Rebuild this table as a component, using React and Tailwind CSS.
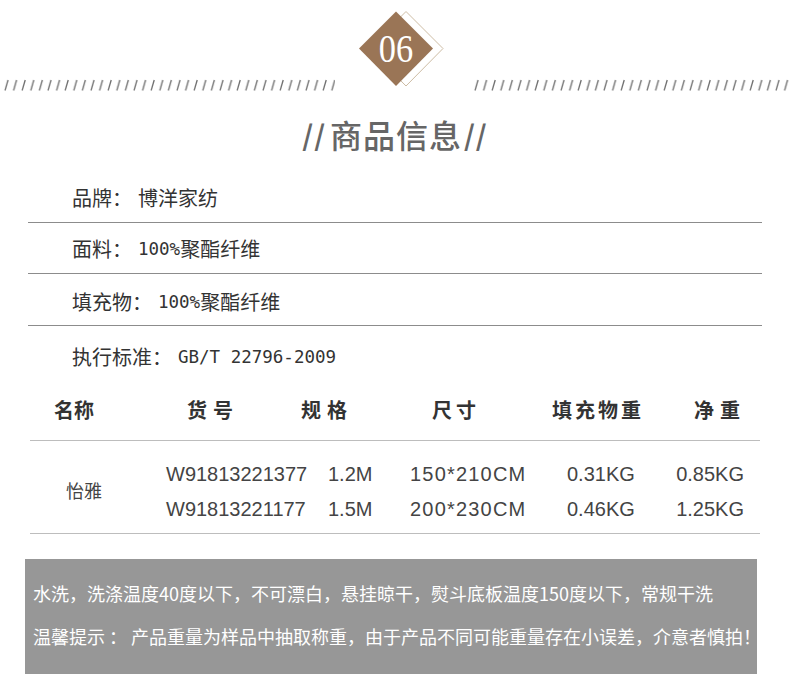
const CJK = { fontFamily: '"Noto Sans CJK SC", "Noto Sans", sans-serif' };
const MONO = { fontFamily: '"DejaVu Sans Mono", "Liberation Mono", monospace' };
const ARIAL = { fontFamily: '"Liberation Sans", Arial, sans-serif' };

function Slashes({ id }) {
  return (
    <svg className="w-full h-[14px] block" aria-hidden="true">
      <defs>
        <pattern id={id} width="8.6" height="14" patternUnits="userSpaceOnUse">
          <line x1="2" y1="12.5" x2="5" y2="2" stroke="#707070" strokeWidth="1.3" />
        </pattern>
      </defs>
      <rect width="100%" height="100%" fill={`url(#${id})`} />
    </svg>
  );
}

const INFO = [
  { label: '品牌：', value: '博洋家纺', cls: 'h-[51px] border-b pb-[10px]' },
  { label: '面料：', value: '100%', rest: '聚酯纤维', cls: 'h-[51px] border-b pb-[10px]' },
  { label: '填充物：', value: '100%', rest: '聚酯纤维', cls: 'h-[52px] border-b pb-[9px]' },
  { label: '执行标准：', value: 'GB/T 22796-2009', cls: 'h-[59px] pb-[14px]' },
];

const HEAD = [
  { t: '名称', cls: 'w-[133px]' },
  { t: '货号', cls: 'w-[114px] tracking-[6px]' },
  { t: '规格', cls: 'w-[131px] tracking-[6px]' },
  { t: '尺寸', cls: 'w-[120px] tracking-[4px]' },
  { t: '填充物重', cls: 'w-[142px] tracking-[3px]' },
  { t: '净重', cls: 'tracking-[6px]' },
];

const ROWS = [
  ['W91813221377', '1.2M', '150*210CM', '0.31KG', '0.85KG'],
  ['W91813221177', '1.5M', '200*230CM', '0.46KG', '1.25KG'],
];

export default function App() {
  return (
    <div className="w-[790px] h-[695px] bg-white overflow-hidden text-[#333]" style={CJK}>
      {/* header ornament */}
      <div className="flex h-[96px]">
        <div className="w-[335px] pt-[78px] pl-[3px]">
          <Slashes id="sl-left" />
        </div>
        <div className="w-[138px] pt-[11px] pl-[24px] relative">
          <svg width="86" height="76" className="block" aria-hidden="true">
            <polygon points="10,37.5 47,0.5 84,37.5 47,75" fill="none" stroke="#cdbca4" strokeWidth="1" />
            <polygon points="0,37.5 37,0.5 74,37.5 37,75" fill="#9a7556" />
          </svg>
          <div className="absolute left-[24px] top-[11px] w-[74px] h-[75px] flex items-center justify-center">
            <span
              className="text-white text-[40px] leading-none scale-x-[0.86] inline-block"
              style={{ fontFamily: '"Liberation Serif", "DejaVu Serif", serif' }}
            >
              06
            </span>
          </div>
        </div>
        <div className="flex-1 pt-[78px]">
          <Slashes id="sl-right" />
        </div>
      </div>

      {/* title */}
      <div className="h-[76px] flex items-center justify-center text-[32px] text-[#666] font-medium tracking-[1px]">
        <span className="font-bold text-[28px] mr-[4px]">//</span>
        商品信息
        <span className="font-bold text-[28px] ml-[2px]">//</span>
      </div>

      {/* info rows */}
      <div className="ml-[28px] w-[734px]">
        {INFO.map((r) => (
          <div key={r.label} className={`${r.cls} border-[#8c8c8c] flex items-end pl-[44px] text-[20px] leading-[28px]`}>
            <span>{r.label}</span>
            <span className="ml-[6px]" style={r.rest || r.value.startsWith('GB') ? MONO : undefined}>
              <span className={r.rest || r.value.startsWith('GB') ? 'text-[17.5px]' : ''}>{r.value}</span>
            </span>
            {r.rest && <span>{r.rest}</span>}
          </div>
        ))}
      </div>

      {/* table */}
      <div className="ml-[30px] w-[730px]">
        <div className="h-[56px] border-b border-[#bdbdbd] flex items-center pb-[5px] pl-[24px] text-[20px] font-bold">
          {HEAD.map((h) => (
            <span key={h.t} className={h.cls}>{h.t}</span>
          ))}
        </div>
        <div className="h-[93px] border-b border-[#bdbdbd] flex text-[#444]">
          <div className="w-[136px] pl-[36px] pt-[6px] flex items-center text-[18px]">怡雅</div>
          <div className="pt-[15px] text-[20px]" style={ARIAL}>
            {ROWS.map((r) => (
              <div key={r[0]} className="h-[35px] flex items-center">
                <span className="w-[162px]">{r[0]}</span>
                <span className="w-[82px]">{r[1]}</span>
                <span className="w-[157px] tracking-[1.2px]">{r[2]}</span>
                <span className="w-[108px]">{r[3]}</span>
                <span className="w-[69px] text-right">{r[4]}</span>
              </div>
            ))}
          </div>
        </div>
      </div>

      {/* notes */}
      <div className="ml-[25px] mt-[25px] w-[732px] h-[115px] bg-[#979797] text-white text-[18px] pl-[8px] pt-[22px]">
        <div className="leading-[24px] whitespace-nowrap">
          水洗，洗涤温度40度以下，不可漂白，悬挂晾干，熨斗底板温度150度以下，常规干洗
        </div>
        <div className="leading-[24px] mt-[19px] whitespace-nowrap">
          温馨提示 ： 产品重量为样品中抽取称重，由于产品不同可能重量存在小误差，介意者慎拍！
        </div>
      </div>
    </div>
  );
}
